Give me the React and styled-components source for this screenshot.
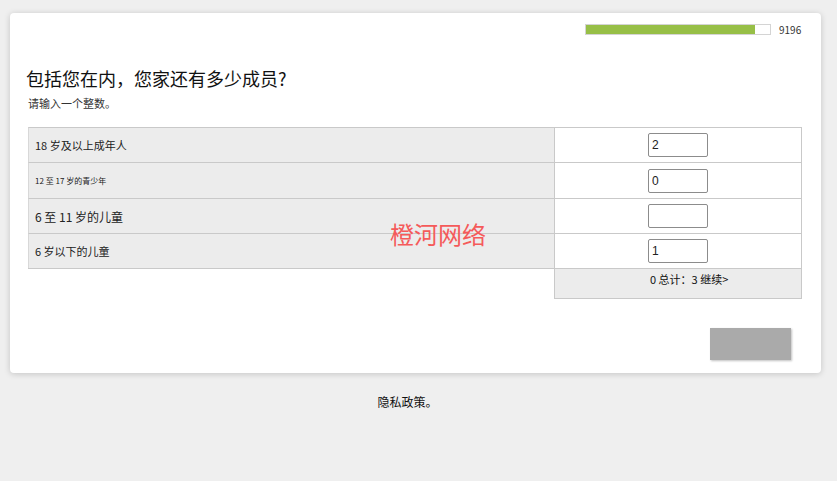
import React from "react";
import styled, { createGlobalStyle } from "styled-components";

const GlobalStyle = createGlobalStyle`
  html, body {
    margin: 0;
    padding: 0;
    background: #efefef;
    font-family: "Noto Sans CJK SC", "Noto Sans", "Liberation Sans", sans-serif;
    color: #222;
  }
`;

const Page = styled.div`
  padding: 13px 16px 0 10px;
`;

const Card = styled.div`
  position: relative;
  width: 811px;
  box-sizing: border-box;
  background: #fff;
  border-radius: 4px;
  box-shadow: 0 1px 6px rgba(0, 0, 0, 0.18);
  padding: 11px 19px 13px 18px;
`;

const ProgressRow = styled.div`
  display: flex;
  justify-content: flex-end;
  align-items: center;
  gap: 8px;
  height: 11px;
`;

const Track = styled.div`
  width: 186px;
  height: 11px;
  box-sizing: border-box;
  border: 1px solid #d4d4d4;
  background: #fff;
`;

const Fill = styled.div`
  height: 100%;
  background: #97bf47;
`;

const Count = styled.span`
  font-size: 10px;
  line-height: 11px;
  width: 23px;
  color: #333;
`;

const Title = styled.h1`
  margin: 32px 0 0 -2px;
  font-size: 18px;
  line-height: 22px;
  font-weight: 400;
  color: #111;
`;

const Hint = styled.p`
  margin: 7px 0 0 0;
  font-size: 11px;
  line-height: 15px;
  color: #333;
`;

const Grid = styled.div`
  margin-top: 16px;
  display: grid;
  grid-template-columns: 526px 248px;
`;

const Label = styled.div`
  height: ${(p) => p.$h}px;
  box-sizing: border-box;
  background: #ececec;
  border-top: 1px solid #c9c9c9;
  border-left: 1px solid #d8d8d8;
  display: flex;
  align-items: center;
  padding-left: 6px;
  font-size: ${(p) => p.$size}px;
  color: #222;
`;

const Cell = styled.div`
  height: ${(p) => p.$h}px;
  box-sizing: border-box;
  border-top: 1px solid #c9c9c9;
  border-left: 1px solid #c9c9c9;
  border-right: 1px solid #c9c9c9;
  display: flex;
  align-items: center;
  justify-content: center;
`;

const NumInput = styled.input`
  width: 60px;
  height: 24px;
  box-sizing: border-box;
  border: 1px solid #8c8c8c;
  border-radius: 2px;
  padding: 0 3px;
  font-family: "Liberation Sans", sans-serif;
  font-size: 12px;
  color: #222;
  background: #fff;
  outline: none;
`;

const Spacer = styled.div`
  border-top: 1px solid #c9c9c9;
`;

const Total = styled.div`
  height: 31px;
  box-sizing: border-box;
  background: #ececec;
  border: 1px solid #c9c9c9;
  padding: 2px 0 0 95px;
  font-size: 11px;
  line-height: 16px;
  color: #111;
`;

const Actions = styled.div`
  display: flex;
  justify-content: flex-end;
  margin-top: 29px;
  padding-right: 11px;
`;

const NextButton = styled.button`
  width: 81px;
  height: 32px;
  border: none;
  background: #aaaaaa;
  box-shadow: 1px 1px 2px rgba(0, 0, 0, 0.25);
  cursor: pointer;
`;

const Watermark = styled.div`
  position: absolute;
  left: 380px;
  top: 205px;
  font-size: 24px;
  line-height: 32px;
  color: #f55a5a;
  pointer-events: none;
`;

const Footer = styled.div`
  text-align: center;
  padding: 20px 16px 0 0;
  font-size: 12px;
  line-height: 18px;
  color: #111;
`;

const rows = [
  { label: "18 岁及以上成年人", size: 11, value: "2", h: 35 },
  { label: "12 至 17 岁的青少年", size: 8, value: "0", h: 36 },
  { label: "6 至 11 岁的儿童", size: 12, value: "", h: 35 },
  { label: "6 岁以下的儿童", size: 11, value: "1", h: 35 },
];

export default function App() {
  return (
    <>
      <GlobalStyle />
      <Page>
        <Card>
          <ProgressRow>
            <Track>
              <Fill style={{ width: "92%" }} />
            </Track>
            <Count>9196</Count>
          </ProgressRow>
          <Title>包括您在内，您家还有多少成员?</Title>
          <Hint>请输入一个整数。</Hint>
          <Grid>
            {rows.map((r) => (
              <React.Fragment key={r.label}>
                <Label $size={r.size} $h={r.h}>{r.label}</Label>
                <Cell $h={r.h}>
                  <NumInput defaultValue={r.value} />
                </Cell>
              </React.Fragment>
            ))}
            <Spacer />
            <Total>0 总计：3 继续&gt;</Total>
          </Grid>
          <Actions>
            <NextButton aria-label="下一步" />
          </Actions>
          <Watermark>橙河网络</Watermark>
        </Card>
        <Footer>隐私政策。</Footer>
      </Page>
    </>
  );
}
